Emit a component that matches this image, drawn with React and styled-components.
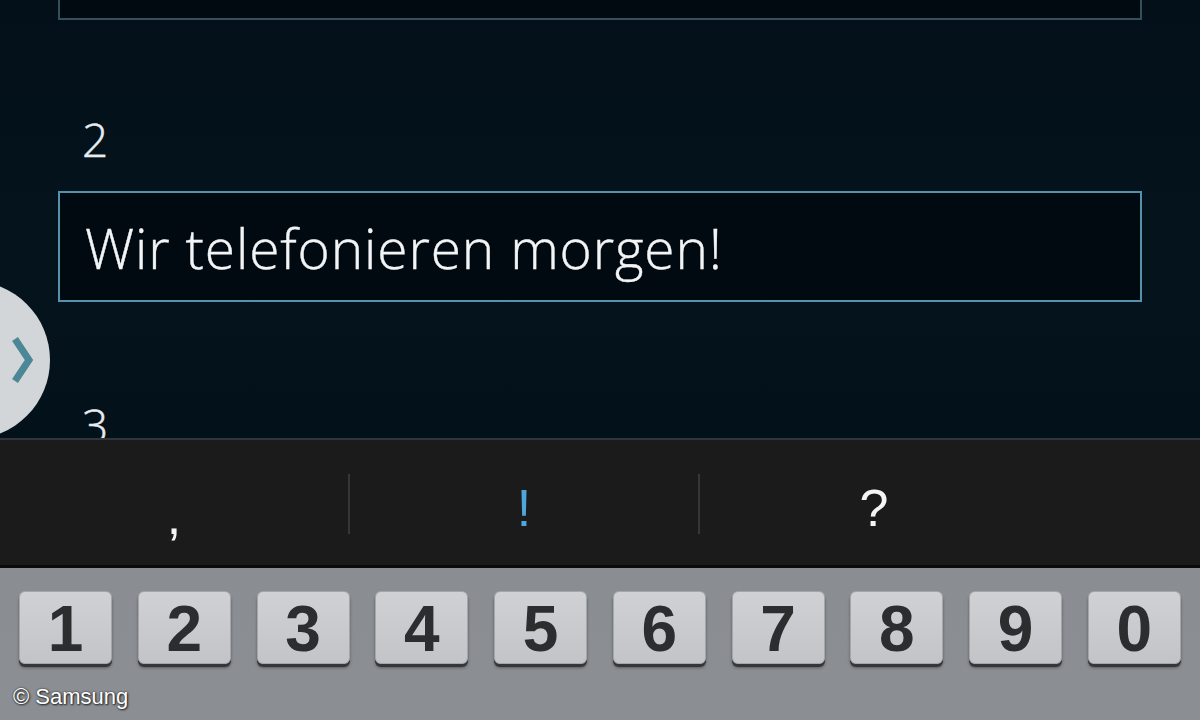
import React from "react";
import styled, { createGlobalStyle } from "styled-components";

const Global = createGlobalStyle`
  html, body { margin: 0; padding: 0; background: #04121b; }
  #root { width: 1200px; height: 720px; overflow: hidden; }
`;

const Screen = styled.div`
  position: relative;
  width: 1200px;
  height: 720px;
  display: flex;
  flex-direction: column;
  overflow: hidden;
  font-family: "Open Sans", "Liberation Sans", sans-serif;
`;

const Content = styled.div`
  height: 438px;
  flex: none;
  overflow: hidden;
  background: linear-gradient(180deg, #03101a 0%, #04131c 60%, #03111a 100%);
  padding: 0 58px;
  box-sizing: border-box;
  display: flex;
  flex-direction: column;
`;

const Field = styled.div`
  box-sizing: border-box;
  flex: none;
  height: ${(p) => p.$h}px;
  border: 2px solid ${(p) => (p.$active ? "#5792ac" : "#34505d")};
  border-top: ${(p) => (p.$cut ? "none" : undefined)};
  background: #010a10;
  display: flex;
  align-items: center;
  padding-left: 25px;
  padding-top: 2px;
  color: #f2f4f5;
  font-size: 55px;
  font-weight: 300;
  letter-spacing: 0.85px;
  -webkit-text-stroke: 0.4px #f2f4f5;
`;

const Label = styled.div`
  flex: none;
  color: #e8ecee;
  font-size: 46px;
  font-weight: 300;
  line-height: 46px;
  padding-left: 24px;
  margin-top: ${(p) => p.$mt}px;
  height: ${(p) => p.$h}px;
  -webkit-text-stroke: 0.4px #e8ecee;
`;

const Handle = styled.div`
  position: absolute;
  left: -108px;
  top: 281px;
  width: 158px;
  height: 158px;
  border-radius: 50%;
  background: #d2d6d8;
  display: flex;
  align-items: center;
  justify-content: flex-end;
  padding-right: 16px;
  box-sizing: border-box;
`;

const SuggestBar = styled.div`
  flex: none;
  height: 130px;
  box-sizing: border-box;
  background: #1b1b1b;
  border-top: 2px solid #30363b;
  border-bottom: 3px solid #0b0b0b;
  display: flex;
  align-items: center;
`;

const Suggestion = styled.div`
  width: 348px;
  height: 100%;
  display: flex;
  align-items: center;
  justify-content: center;
  font-family: "Liberation Sans", "Open Sans", sans-serif;
  font-size: 52px;
  font-weight: 400;
  color: ${(p) => (p.$hl ? "#4fa6dc" : "#f5f5f5")};
  padding-top: ${(p) => (p.$low ? 26 : 10)}px;
  box-sizing: border-box;
`;

const Divider = styled.div`
  width: 2px;
  height: 60px;
  margin-top: 2px;
  background: #33373a;
  flex: none;
`;

const Keyboard = styled.div`
  flex: 1;
  background: linear-gradient(180deg, #8a8d92 0%, #8b8e93 100%);
  padding: 23px 19px 0;
  box-sizing: border-box;
  display: flex;
  justify-content: space-between;
  align-items: flex-start;
`;

const Key = styled.div`
  width: 93px;
  height: 73px;
  box-sizing: border-box;
  border-radius: 6px;
  background: linear-gradient(180deg, #cfd1d4 0%, #c2c4c7 100%);
  border: 1px solid #a4a7aa;
  box-shadow: 0 3px 0 #34373a, 0 4px 3px rgba(0, 0, 0, 0.35);
  display: flex;
  align-items: center;
  justify-content: center;
  font-family: "Liberation Sans", Arial, sans-serif;
  font-weight: 700;
  font-size: 64px;
  color: #2b2d2f;
  line-height: 1;
  padding-top: 2px;
`;

const Copyright = styled.div`
  position: absolute;
  left: 13px;
  top: 684px;
  font-family: "Liberation Sans", Arial, sans-serif;
  font-size: 22px;
  color: #ffffff;
  text-shadow: 0 0 2px #222, 1px 1px 2px #222;
`;

export default function App() {
  const keys = ["1", "2", "3", "4", "5", "6", "7", "8", "9", "0"];
  return (
    <>
      <Global />
      <Screen>
        <Content>
          <Field $h={20} $cut />
          <Label $mt={96} $h={75}>2</Label>
          <Field $h={111} $active>Wir telefonieren morgen!</Field>
          <Label $mt={100} $h={60}>3</Label>
        </Content>
        <Handle>
          <svg width="22" height="48" viewBox="0 0 22 48">
            <polyline points="3,3 17,24 3,45" fill="none" stroke="#4c8798" strokeWidth="7" />
          </svg>
        </Handle>
        <SuggestBar>
          <Suggestion $low>,</Suggestion>
          <Divider />
          <Suggestion $hl>!</Suggestion>
          <Divider />
          <Suggestion>?</Suggestion>
        </SuggestBar>
        <Keyboard>
          {keys.map((k) => (
            <Key key={k}>{k}</Key>
          ))}
        </Keyboard>
        <Copyright>© Samsung</Copyright>
      </Screen>
    </>
  );
}
